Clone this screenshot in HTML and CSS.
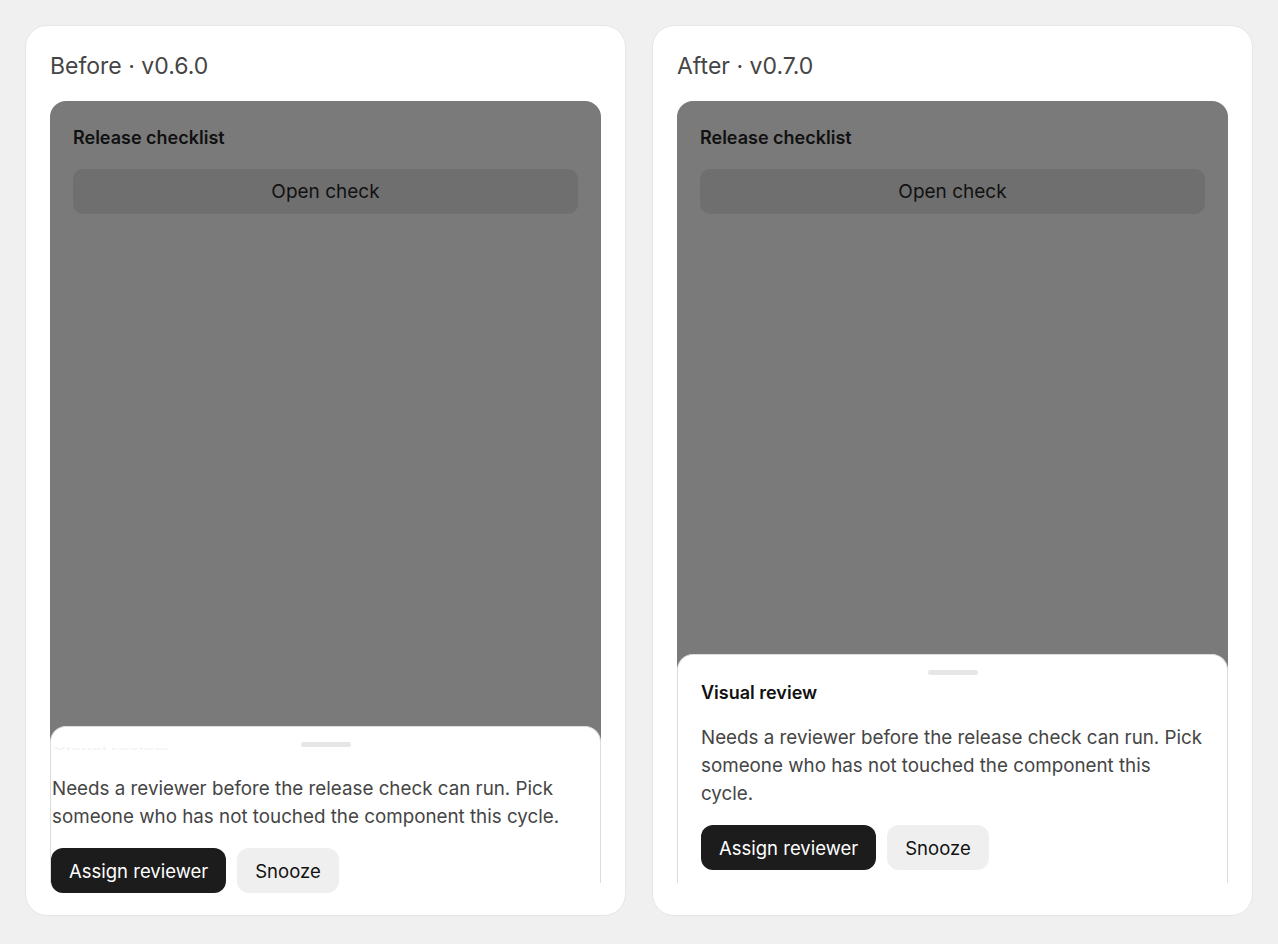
FILE: index.html
```html
<!DOCTYPE html>
<html lang="en">

<head>
    <meta charset="UTF-8">
    <meta name="viewport" content="width=device-width, initial-scale=1.0">
    <title>Sheet regression</title>
    <link rel="stylesheet" href="styles.css">
</head>

<body>
    <div class="compare">
        <div class="panel">
            <h2 class="panel-title">Before · v0.6.0</h2>
            <div class="device">
                <div class="screen-title">Release checklist</div>
                <div class="open-btn">Open check</div>

                <div class="sheet sheet-broken">
                    <div class="handle"></div>
                    <div class="sheet-title">Visual review</div>
                    <p class="sheet-text">Needs a reviewer before the release check can run. Pick someone who has not touched the component this cycle.</p>
                    <div class="actions">
                        <button class="btn btn-primary">Assign reviewer</button>
                        <button class="btn btn-secondary">Snooze</button>
                    </div>
                </div>
            </div>
        </div>

        <div class="panel">
            <h2 class="panel-title">After · v0.7.0</h2>
            <div class="device">
                <div class="screen-title">Release checklist</div>
                <div class="open-btn">Open check</div>

                <div class="sheet">
                    <div class="handle"></div>
                    <div class="sheet-title">Visual review</div>
                    <p class="sheet-text">Needs a reviewer before the release check can run. Pick someone who has not touched the component this cycle.</p>
                    <div class="actions">
                        <button class="btn btn-primary">Assign reviewer</button>
                        <button class="btn btn-secondary">Snooze</button>
                    </div>
                </div>
            </div>
        </div>
    </div>
</body>

</html>
```

FILE: styles.css
```css
:root {
    --page: #f0f0f0;
    --card-border: #e6e6e6;
    --scrim: #7a7a7a;
    --scrim-btn: #6f6f6f;
    --ink: #111111;
    --muted: #454545;
}

* {
    box-sizing: border-box;
    margin: 0;
    padding: 0;
    font-family: Inter, 'Noto Sans', sans-serif;
}

body {
    background: var(--page);
    color: var(--ink);
    padding: 25px;
}

.compare {
    display: grid;
    grid-template-columns: 601px 601px;
    gap: 26px;
}

.panel {
    background: white;
    border: 1px solid var(--card-border);
    border-radius: 22px;
    height: 891px;
    padding: 24px 24px 0;
}

.panel-title {
    font-size: 23px;
    font-weight: 400;
    line-height: 32px;
    color: var(--muted);
    margin-bottom: 19px;
}

.device {
    position: relative;
    height: 782px;
    background: var(--scrim);
    border-radius: 16px 16px 0 0;
    padding: 24px 23px;
}

.screen-title {
    font-size: 18px;
    font-weight: 600;
    line-height: 26px;
    color: var(--ink);
}

.open-btn {
    margin-top: 18px;
    height: 45px;
    border-radius: 10px;
    background: var(--scrim-btn);
    display: flex;
    align-items: center;
    justify-content: center;
    font-size: 19px;
    color: var(--ink);
}

/* bottom sheet */
.sheet {
    position: absolute;
    left: 0;
    right: 0;
    bottom: 0;
    background: white;
    border: 1px solid #dcdcdc;
    border-bottom: none;
    border-radius: 16px 16px 0 0;
    padding: 15px 23px 13px;
}

.handle {
    width: 50px;
    height: 5px;
    border-radius: 3px;
    background: #e6e6e6;
    margin: 0 auto 8px;
}

.sheet-title {
    font-size: 18px;
    font-weight: 600;
    line-height: 20px;
    color: var(--ink);
}

.sheet-text {
    margin-top: 21px;
    font-size: 18.8px;
    line-height: 28px;
    color: var(--muted);
}

.actions {
    display: flex;
    gap: 11px;
    margin-top: 17px;
}

.btn {
    border: none;
    height: 45px;
    padding: 0 18px;
    border-radius: 12px;
    font-size: 18.5px;
    cursor: pointer;
}

.btn-primary {
    background: #1c1c1c;
    color: white;
}

.btn-secondary {
    background: #efefef;
    color: var(--ink);
}

/* v0.6.0: sheet lost its padding and the title collapsed */
.sheet-broken {
    height: 157px;
    padding: 15px 0 0;
}

.sheet-broken .handle {
    margin-bottom: 0;
}

.sheet-broken .sheet-title {
    transform: scaleY(0.2);
    color: #f2f2f2;
    padding-left: 2px;
    margin-top: -8px;
}

.sheet-broken .sheet-text {
    margin-top: 16px;
    padding-left: 1px;
    padding-right: 23px;
}

.sheet-broken .actions {
    margin-top: 17px;
}
```
